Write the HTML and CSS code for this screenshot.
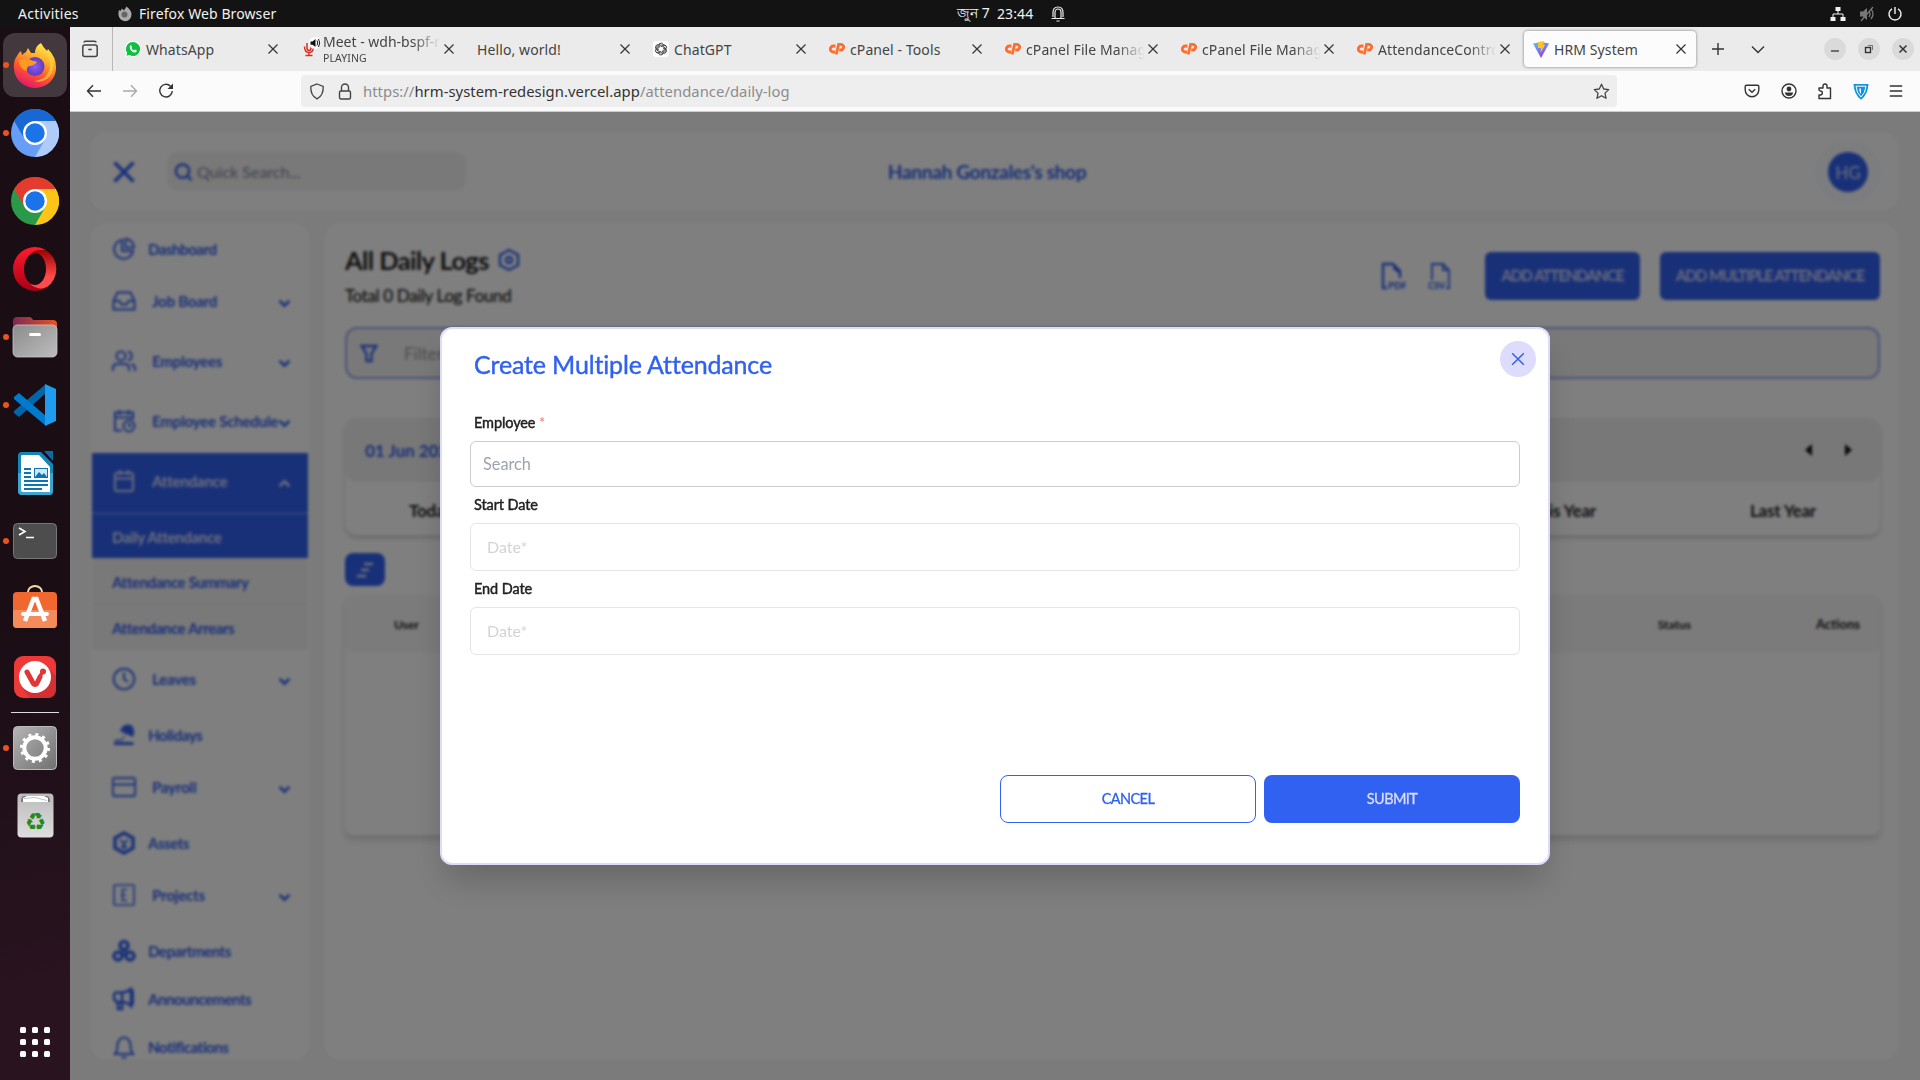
FILE: index.html
```html
<!DOCTYPE html>
<html lang="en">
<head>
<meta charset="utf-8">
<title>HRM System</title>
<link rel="stylesheet" href="styles.css">
</head>
<body>
<svg width="0" height="0" class="defs">
  <symbol id="x" viewBox="0 0 12 12"><path d="M1.5 1.5l9 9M10.500 1.500l-9 9" fill="none" stroke="currentColor" stroke-width="1.2"/></symbol>
  <symbol id="chev" viewBox="0 0 12 8"><path d="M1.500 1.500L6 6l4.500-4.500" fill="none" stroke="currentColor" stroke-width="2.400"/></symbol>
  <symbol id="cp" viewBox="0 0 16 14"><path d="M6.500 4H4.300a3 3 0 0 0 0 6H6M7.200 12.500L9.600 2.300h2.200a2.800 2.800 0 0 1 0 5.700h-1.600" fill="none" stroke="#ff6c2c" stroke-width="2.800"/></symbol>
</svg>

<header class="topbar">
  <span class="activities">Activities</span>
  <svg class="tb-fox" width="16" height="16" viewBox="0 0 16 16"><path d="M2 4l1.500 1L5 2.500 7 4.500 9.500.5c2 2 5 4 5 8a6.500 6.500 0 0 1-13 .3C1.500 7 1.500 5.500 2 4z" fill="#aaa"/><circle cx="7.500" cy="8.500" r="3" fill="#666"/></svg>
  <span class="app">Firefox Web Browser</span>
  <div class="clock"><span class="month">জুন 7</span><span class="time">23:44</span>
    <svg width="14" height="16" viewBox="0 0 14 16" fill="none" stroke="#eee" stroke-width="1.200"><path d="M.5 12.500h13M4 12V6.500a3 3.500 0 0 1 6 0V12M2 11V6.500Q2 1 7 1t5 5.500V11M5.500 15h3"/></svg></div>
  <div class="tray">
    <svg width="16" height="16" viewBox="0 0 16 16"><path d="M5.500 1h5v4h-5zM0.500 11h5v4h-5zM10.500 11h5v4h-5z" fill="#f2f2f2"/><path d="M8 5v3M3 11V8h10v3" fill="none" stroke="#f2f2f2"/></svg>
    <svg width="16" height="16" viewBox="0 0 16 16"><path d="M1 5.500h3L8 2v12l-4-3.500H1z" fill="#777"/><path d="M10 5q2 3 0 6M12 3q4 5 0 10M2 15L14 1" fill="none" stroke="#777" stroke-width="1.300"/></svg>
    <svg width="16" height="16" viewBox="0 0 16 16" fill="none" stroke="#f2f2f2" stroke-width="1.400"><path d="M5 2.800a6 6 0 1 0 6 0M8 1v7"/></svg>
  </div>
</header>

<div class="desktop">
<aside class="dock">
  <div class="app-slot running current">
    <svg width="44" height="46" viewBox="0 0 44 46"><defs><linearGradient id="ff" x1=".8" y1="0" x2=".35" y2="1"><stop offset="0" stop-color="#fff44f"/><stop offset=".35" stop-color="#ffb02e"/><stop offset=".65" stop-color="#ff5a2c"/><stop offset="1" stop-color="#e5156d"/></linearGradient><radialGradient id="fp"><stop offset="0" stop-color="#9059ff"/><stop offset="1" stop-color="#5b3fb5"/></radialGradient></defs>
    <path d="M4 14Q5 11 8 9l1 4q2-2 4-3l2-4 3 5h4Q22 4 28 1q2 4 6 8l1-2q8 8 8 18A21 20 0 0 1 1 27Q0 19 4 14z" fill="url(#ff)"/><circle cx="22" cy="24.500" r="9.500" fill="url(#fp)"/><path d="M6 18q8-3 14 1 3 0 4 1-3 4-8 4-3 2-2 5-8-2-8-11z" fill="#ff9a1f"/><path d="M28 6q11 9 9 20-3 12-16 13 12 3 18-8 4-12-3-21z" fill="#ffd53a" opacity=".65"/></svg></div>
  <div class="app-slot running">
    <svg width="48" height="48" viewBox="0 0 48 48"><circle cx="24" cy="24" r="24" fill="#669df6"/><path d="M3.200 12A24 24 0 0 1 44.800 12H24L13.600 30z" fill="#1967d2"/><path d="M44.800 12A24 24 0 0 1 24 48L34.400 30 24 12z" fill="#aecbfa"/><circle cx="24" cy="24" r="12" fill="#fff"/><circle cx="24" cy="24" r="9.700" fill="#1a73e8"/></svg></div>
  <div class="app-slot">
    <svg width="48" height="48" viewBox="0 0 48 48"><circle cx="24" cy="24" r="24" fill="#2a9a48"/><path d="M3.200 12A24 24 0 0 1 44.800 12H24L13.600 30z" fill="#e33b2e"/><path d="M44.800 12A24 24 0 0 1 24 48L34.400 30 24 12z" fill="#fcc417"/><circle cx="24" cy="24" r="12" fill="#fff"/><circle cx="24" cy="24" r="9.700" fill="#1a73e8"/></svg></div>
  <div class="app-slot">
    <svg width="44" height="44" viewBox="0 0 44 44"><defs><linearGradient id="op" x1="0" y1="0" x2="0" y2="1"><stop offset="0" stop-color="#ff1b2d"/><stop offset="1" stop-color="#a70014"/></linearGradient><linearGradient id="oq" x1="0" y1="0" x2="0" y2="1"><stop offset="0" stop-color="#9c0000"/><stop offset=".7" stop-color="#ff4b4b"/></linearGradient></defs><path d="M22 0a22 22 0 1 0 0 44 22 22 0 0 0 11-3L22 38c-6 0-11-7-11-16S16 6 22 6l11-3A22 22 0 0 0 22 0z" fill="url(#op)"/><path d="M17 7q4-4 10-4 4 0 7 1a22 22 0 0 1 0 36q-8 4-17-3 3 1 5 1c6 0 11-7 11-16S28 6 22 6q-3 0-5 1z" fill="url(#oq)"/></svg></div>
  <div class="app-slot running">
    <svg width="46" height="42" viewBox="0 0 46 42"><defs><linearGradient id="fo"><stop offset="0" stop-color="#7b2a56"/><stop offset="1" stop-color="#e95420"/></linearGradient><linearGradient id="gr" x1="0" y1="0" x2="1" y2="1"><stop offset="0" stop-color="#8c8c8c"/><stop offset="1" stop-color="#bdbdbd"/></linearGradient></defs><path d="M1 5q0-4 4-4h12q3 0 4 3h20q4 0 4 4v12H1z" fill="url(#fo)"/><rect x="1" y="9" width="44" height="32" rx="4.500" fill="url(#gr)" stroke="#c8c8c8" stroke-width=".8"/><rect x="17" y="17" width="12" height="3" rx="1.500" fill="#fff"/></svg></div>
  <div class="app-slot running">
    <svg width="42" height="42" viewBox="0 0 42 42"><path d="M0 29l5 4L32 9V0L0 27z" fill="#0065a9"/><path d="M0 13l5-4 27 23v10L0 15z" fill="#007acc"/><path d="M31 0l11 5v32l-11 5z" fill="#1f9cf0"/></svg></div>
  <div class="app-slot">
    <svg width="37" height="45" viewBox="0 0 37 45"><path d="M5 1h19l12 12v27q0 4-4 4H5q-4 0-4-4V5q0-4 4-4z" fill="#1584ba"/><path d="M1 22h35v18q0 4-4 4H5q-4 0-4-4z" fill="#3fa3d0"/><path d="M27 0h9v10z" fill="#0b6ba5"/><path d="M5 4h17l11 12v25H6q-2 0-2-2V6q0-2 1-2z" fill="#fff"/><path d="M7 18h7M7 22h7M7 26h7M7 30h24M7 34h24M7 38h18" stroke="#0c74b4" stroke-width="1.900"/><rect x="17.500" y="17.500" width="13" height="9" fill="#cfe9f7" stroke="#0c74b4"/><path d="M18 26l4-5 3 3 2-2 3 4z" fill="#0c74b4"/></svg></div>
  <div class="app-slot running">
    <svg width="44" height="36" viewBox="0 0 44 36"><rect x=".5" y=".5" width="43" height="35" rx="4" fill="#4d4d4d" stroke="#777"/><path d="M6 5l6 3.500L6 12M13 14.500h8" fill="none" stroke="#fff" stroke-width="1.600"/></svg></div>
  <div class="app-slot software">
    <svg width="44" height="43" viewBox="0 0 44 43"><path d="M15 9V7a7 6 0 0 1 14 0v2" fill="none" stroke="#f6d9a8" stroke-width="2"/><rect y="7" width="44" height="36" rx="4" fill="#f0672f"/><path d="M0 25h44v14q0 4-4 4H4q-4 0-4-4z" fill="#f58a5a"/><path d="M12 36l8.500-22h3L32 36" fill="none" stroke="#fff" stroke-width="4.500"/><rect x="8" y="27" width="28" height="4" rx="2" fill="#fff"/></svg></div>
  <div class="app-slot">
    <svg width="42" height="42" viewBox="0 0 42 42"><rect width="42" height="42" rx="9" fill="#ef3939"/><path d="M34 12l8 8v13q0 9-9 9H16L8 32z" fill="#d42f33"/><circle cx="21" cy="21" r="16" fill="#fff"/><path d="M13 16l6 11q2 3 4 0l3-6" fill="none" stroke="#e23636" stroke-width="5" stroke-linecap="round"/><path d="M25 22l4-7" stroke="#e23636" stroke-width="3.500"/><circle cx="29" cy="15.500" r="3" fill="#e23636"/></svg></div>
  <hr class="dock-sep">
  <div class="app-slot running">
    <svg width="44" height="44" viewBox="0 0 44 44"><defs><linearGradient id="sg" x1="0" y1="0" x2="1" y2="1"><stop offset="0" stop-color="#b5b5b5"/><stop offset="1" stop-color="#707070"/></linearGradient></defs><rect x=".5" y=".5" width="43" height="43" rx="4" fill="url(#sg)" stroke="#bbb"/><circle cx="22" cy="22" r="10.700" fill="none" stroke="#fff" stroke-width="4"/><circle cx="22" cy="22" r="13.500" fill="none" stroke="#fff" stroke-width="3" stroke-dasharray="3 4.070"/></svg></div>
  <div class="app-slot trash">
    <svg width="37" height="45" viewBox="0 0 37 45"><defs><linearGradient id="tr" x1="0" y1="0" x2="0" y2="1"><stop offset="0" stop-color="#bbb"/><stop offset="1" stop-color="#dedede"/></linearGradient></defs><rect x=".5" y=".5" width="36" height="44" rx="4" fill="url(#tr)"/><path d="M4 9q0-6 3-6h23q3 0 3 6z" fill="#777"/><path d="M6 9V5l4-2h17l4 2v4z" fill="#fff"/><path d="M7 5.500l11-1 12 3" fill="none" stroke="#999" stroke-width=".6"/><text x="18.500" y="37" text-anchor="middle" font-family="DejaVu Sans" font-size="24" fill="#258a1c">♻</text></svg></div>
  <div class="grid-btn"><i></i><i></i><i></i><i></i><i></i><i></i><i></i><i></i><i></i></div>
</aside>

<div class="window">
  <div class="tabs">
    <div class="fxview"><svg width="16" height="18" viewBox="0 0 16 18" fill="none" stroke="#444" stroke-width="1.500"><rect x=".8" y="5" width="14.400" height="11.500" rx="2"/><path d="M2 2.500Q2 1.200 3.500 1.200h9Q14 1.200 14 2.500M6.300 9.500h3.500"/></svg></div>
    <div class="tab"><svg width="16" height="16" viewBox="0 0 16 16"><path d="M8 0a8 8 0 1 1-3.800 15L0 16l1-4A8 8 0 0 1 8 0z" fill="#fff"/><path d="M8 1a7 7 0 1 1-3.500 13L1.500 14.800 2.200 12A7 7 0 0 1 8 1z" fill="#0fc13e"/><path d="M5.200 4.500q1-1 1.500.8l.3 1-.7.8q1 1.800 2.800 2.400l.9-1 1.700.8q.2 1.700-1.500 2.100-3 .2-5-3.200-1-2.200 0-3.700z" fill="#fff"/></svg><span class="t">WhatsApp</span><svg class="c"><use href="#x"/></svg></div>
    <div class="tab"><svg class="meet" width="18" height="20" viewBox="0 0 18 20"><path d="M4 6v5q0 2.500 2 2.500T8 11V6M1.500 9.500q0 6 4.500 6t4.500-6M6 15.500v3M2.500 18.500h7" fill="none" stroke="#d93025" stroke-width="1.500"/><circle cx="12" cy="6" r="6" fill="#fff"/><path d="M7.500 4.500h2L12.500 2v8L9.500 7.700h-2z" fill="#111"/><path d="M14 3.500q1.500 2.500 0 5M15.500 2q2.500 4 0 8" fill="none" stroke="#111"/></svg><span class="t two fade"><b>Meet - wdh-bspf-n</b><small>PLAYING</small></span><svg class="c"><use href="#x"/></svg></div>
    <div class="tab"><span class="t hello">Hello, world!</span><svg class="c"><use href="#x"/></svg></div>
    <div class="tab"><svg width="16" height="16" viewBox="0 0 16 16"><rect width="16" height="16" rx="3" fill="#fff"/><g fill="none" stroke="#222" stroke-width=".75"><path id="petal" d="M6 7V4.300a2.300 2.300 0 0 1 4.300-1.100M6 5.500l3-1.700q2.500-.8 3.500 1.500"/><use href="#petal" transform="rotate(60 8 8)"/><use href="#petal" transform="rotate(120 8 8)"/><use href="#petal" transform="rotate(180 8 8)"/><use href="#petal" transform="rotate(240 8 8)"/><use href="#petal" transform="rotate(300 8 8)"/></g></svg><span class="t">ChatGPT</span><svg class="c"><use href="#x"/></svg></div>
    <div class="tab"><svg width="16" height="14"><use href="#cp"/></svg><span class="t">cPanel - Tools</span><svg class="c"><use href="#x"/></svg></div>
    <div class="tab"><svg width="16" height="14"><use href="#cp"/></svg><span class="t fade">cPanel File Manag</span><svg class="c"><use href="#x"/></svg></div>
    <div class="tab"><svg width="16" height="14"><use href="#cp"/></svg><span class="t fade">cPanel File Manag</span><svg class="c"><use href="#x"/></svg></div>
    <div class="tab"><svg width="16" height="14"><use href="#cp"/></svg><span class="t fade">AttendanceContro</span><svg class="c"><use href="#x"/></svg></div>
    <div class="tab active"><svg width="16" height="17" viewBox="0 0 16 17"><defs><linearGradient id="vi" x1="0" y1="0" x2=".6" y2="1"><stop offset="0" stop-color="#41d1ff"/><stop offset="1" stop-color="#a031f5"/></linearGradient></defs><path d="M0 2.500L8 1l8 1.500L8 17z" fill="url(#vi)"/><path d="M5 1l6-1-.8 3.500 2 .2L7.500 12 8 7H5z" fill="#ffc51e"/></svg><span class="t">HRM System</span><svg class="c"><use href="#x"/></svg></div>
    <svg class="plus" width="14" height="14" viewBox="0 0 14 14"><path d="M7 1v12M1 7h12" stroke="#333" stroke-width="1.400"/></svg>
    <svg class="alltabs" width="14" height="9" viewBox="0 0 14 9"><path d="M1 1.500l6 6 6-6" fill="none" stroke="#333" stroke-width="1.400"/></svg>
    <div class="wc"><i><svg width="10" height="10" viewBox="0 0 10 10"><path d="M1 7h8" stroke="#333" stroke-width="1.300"/></svg></i><i><svg width="10" height="10" viewBox="0 0 10 10" fill="none" stroke="#333"><rect x="1.500" y="3.500" width="5" height="5" stroke-width="1.400"/><path d="M4 1.500h4.500V6" opacity=".6"/></svg></i><i><svg width="10" height="10" viewBox="0 0 10 10"><path d="M1.500 1.500l7 7M8.500 1.500l-7 7" stroke="#333" stroke-width="1.500"/></svg></i></div>
  </div>

  <div class="nav">
    <div class="nav-left">
      <svg width="16" height="14" viewBox="0 0 16 14" fill="none" stroke="#333" stroke-width="1.400"><path d="M15 7H1.500M7 1.200L1.500 7 7 12.800"/></svg>
      <svg width="16" height="14" viewBox="0 0 16 14" fill="none" stroke="#aaa" stroke-width="1.400"><path d="M1 7h13.500M9 1.200L14.500 7 9 12.800"/></svg>
      <svg width="16" height="16" viewBox="0 0 16 16"><path d="M12.500 3.200A6.300 6.300 0 1 0 14.300 8" fill="none" stroke="#333" stroke-width="1.400"/><path d="M15 .5V6H9.500z" fill="#333"/></svg>
    </div>
    <div class="urlbar">
      <svg width="16" height="17" viewBox="0 0 16 17" fill="none" stroke="#444" stroke-width="1.300"><path d="M8 1l6.200 2.500c.3 6-1.500 10-6.200 12.400C3.300 13.500 1.500 9.500 1.800 3.500z"/></svg>
      <svg width="14" height="17" viewBox="0 0 14 17" fill="none" stroke="#444" stroke-width="1.400"><rect x="1.500" y="8" width="11" height="8" rx="1.500"/><path d="M3.500 8V4.500a3.500 3.500 0 0 1 7 0V8"/></svg>
      <span class="url">https://<b>hrm-system-redesign.vercel.app</b>/attendance/daily-log</span>
      <svg width="17" height="17" viewBox="0 0 17 17" fill="none" stroke="#444" stroke-width="1.300" stroke-linejoin="round"><path d="M8.500 1.300l2.200 4.700 5 .6-3.700 3.500 1 5.200-4.500-2.600L4 15.300l1-5.200L1.300 6.600l5-.6z"/></svg>
    </div>
    <div class="nav-right">
      <svg width="16" height="16" viewBox="0 0 16 16" fill="none" stroke="#333" stroke-width="1.400"><path d="M2.500 2.200h11q1.300 0 1.300 1.300V7a6.800 6.800 0 0 1-13.600 0V3.500q0-1.300 1.300-1.300z"/><path d="M4.800 6.300L8 9.300l3.200-3"/></svg>
      <svg width="16" height="16" viewBox="0 0 16 16"><circle cx="8" cy="8" r="7" fill="none" stroke="#333" stroke-width="1.400"/><circle cx="8" cy="6" r="2.400" fill="#333"/><path d="M3.800 9.500h8.400Q11.500 13 8 13T3.800 9.500z" fill="#333"/></svg>
      <svg width="16" height="17" viewBox="0 0 16 17" fill="none" stroke="#333" stroke-width="1.400"><path d="M2 7V5h4V3a2 2 0 0 1 4 0v2h3.500v10.500H2V12h1.300a2 2 0 0 0 0-4z" stroke-linejoin="round"/></svg>
      <svg width="16" height="17" viewBox="0 0 16 17"><path d="M.5 1h15Q15 11.500 8 16.800 1 11.500.5 1z" fill="#1593dd"/><path d="M3 3.200h10Q12.500 10 8 14 3.500 10 3 3.200z" fill="none" stroke="#fff" stroke-width="1"/><path d="M8 5.500H6.200Q6.200 9 8 11z" fill="#fff"/></svg>
      <svg width="14" height="14" viewBox="0 0 14 14" stroke="#333" stroke-width="1.500"><path d="M.8 2h12.400M.8 7h12.400M.8 12h12.400"/></svg>
    </div>
  </div>

  <div class="page">
    <header class="shop">
      <svg class="burger" width="24" height="24" viewBox="0 0 24 24"><path d="M2.500 2.500l19 19M21.500 2.500l-19 19" stroke="#3161f1" stroke-width="3.500"/></svg>
      <div class="search"><svg width="19" height="20" viewBox="0 0 20 20" fill="none" stroke="#3161f1" stroke-width="2.600"><circle cx="9" cy="9" r="7"/><path d="M14 14l4.500 4.500"/></svg><span>Quick Search...</span></div>
      <h1>Hannah Gonzales's shop</h1>
      <div class="halo"><div class="avatar">HG</div></div>
    </header>
    <div class="cols">
      <nav class="side">
        <a class="leaf"><svg viewBox="0 0 24 24"><path d="M10 3a9.500 9.500 0 1 0 11 11H10z"/><path d="M13.500 1.800A9 9 0 0 1 22 10.500h-8.500z"/></svg><span>Dashboard</span></a>
        <a class="grp"><svg viewBox="0 0 24 24"><path d="M1.500 12h6l2 3.500h5l2-3.500h6M5.500 3.500h13l4 8.500v8.500h-21V12z"/></svg><span>Job Board</span><svg class="v"><use href="#chev"/></svg></a>
        <a class="grp"><svg viewBox="0 0 24 24"><circle cx="9" cy="7" r="4.500"/><path d="M1 22v-3q0-4 4-4h8q4 0 4 4v3M16 2.500a4.600 4.600 0 0 1 0 9M19.500 15.200q3.500 1 3.500 4V22"/></svg><span>Employees</span><svg class="v"><use href="#chev"/></svg></a>
        <a class="grp"><svg viewBox="0 0 24 24"><path d="M10 21.500H3v-18h18v7M3 8.500h18M7.500 1v5M16.500 1v5"/><circle cx="17" cy="17" r="5.500"/><path d="M17 14v3h2.500"/></svg><span>Employee Schedule</span><svg class="v"><use href="#chev"/></svg></a>
        <a class="grp on"><svg viewBox="0 0 24 24"><rect x="3" y="4" width="18" height="18" rx="2"/><path d="M3 9.500h18M8 1v5M16 1v5"/></svg><span>Attendance</span><svg class="v up"><use href="#chev"/></svg></a>
        <a class="sub on">Daily Attendance</a>
        <a class="sub">Attendance Summary</a>
        <a class="sub">Attendance Arrears</a>
        <a class="grp leaves"><svg viewBox="0 0 24 24"><circle cx="12" cy="12" r="10.300"/><path d="M12 5.500V12l4 3"/></svg><span>Leaves</span><svg class="v"><use href="#chev"/></svg></a>
        <a class="leaf"><svg class="f" viewBox="0 0 24 24"><path d="M8 8Q11 0 19 2q5 5 2 12zM15 9l-5 9H1q5-3 8-1M2 19h19l1 3H2z"/></svg><span>Holidays</span></a>
        <a class="grp"><svg viewBox="0 0 24 24"><rect x="0.800" y="3" width="22.400" height="18" rx="2"/><path d="M1 9.500h22"/></svg><span>Payroll</span><svg class="v"><use href="#chev"/></svg></a>
        <a class="leaf"><svg viewBox="0 0 24 24"><path d="M12 2l9 5v10l-9 5-9-5V7z" stroke-width="3.500"/><path d="M8 9l4 3 4-3M12 12v4M9 15l3 2 3-2"/></svg><span>Assets</span></a>
        <a class="grp"><svg viewBox="0 0 24 24" class="thin"><rect x="2" y="2" width="20" height="20" rx="1"/><path d="M15 6.500h-4.500v11H15M9 12h5"/></svg><span>Projects</span><svg class="v"><use href="#chev"/></svg></a>
        <a class="leaf"><svg viewBox="0 0 24 24"><circle cx="12" cy="6.500" r="4" stroke-width="3.500"/><circle cx="6" cy="17" r="4" stroke-width="3.500"/><circle cx="18" cy="17" r="4" stroke-width="3.500"/><circle cx="12" cy="13.500" r="2"/></svg><span>Departments</span></a>
        <a class="leaf"><svg viewBox="0 0 24 24"><path d="M3 5.500h7q5 0 9-3.500v17q-4-4-9-4H5q-3-1-3-5t2-4.500M6 15v7h4v-7M10 5.500V15" stroke-width="2.600"/><path d="M20 3v15" stroke-width="4"/></svg><span>Announcements</span></a>
        <a class="leaf"><svg viewBox="0 0 24 24"><path d="M3 19q2.500-3 2.500-9a6.500 7.500 0 0 1 13 0q0 6 2.500 9zM9.500 22.500h5"/></svg><span>Notifications</span></a>
      </nav>
      <main class="main">
        <div class="head">
          <div><div class="h"><h2>All Daily Logs</h2><svg width="22" height="24" viewBox="0 0 22 24" fill="none" stroke="#3161f1" stroke-width="2.400"><path d="M11 2l9 5v10l-9 5-9-5V7z"/><circle cx="11" cy="12" r="3"/></svg></div><p>Total 0 Daily Log Found</p></div>
          <div class="acts">
            <svg width="25" height="28" viewBox="0 0 25 28"><path d="M6 26H2V2h10l7 7v7" fill="none" stroke="#3161f1" stroke-width="2.400"/><path d="M12 1l8 8v4l-8-6z" fill="#3161f1"/><text x="7" y="27" font-size="9.500">PDF</text></svg>
            <svg width="23" height="28" viewBox="0 0 23 28"><path d="M4 18V2h11l6 6v18h-3M15 2v6h6" fill="none" stroke="#3161f1" stroke-width="1.800"/><text x="0" y="27" font-size="9">CSV</text></svg>
            <button class="b1">ADD ATTENDANCE</button><button class="b2">ADD MULTIPLE ATTENDANCE</button>
          </div>
        </div>
        <div class="filter"><svg width="18" height="19" viewBox="0 0 18 19" fill="none" stroke="#3161f1" stroke-width="2.300"><path d="M1.500 2h15l-5 7.500V17h-5V9.500z"/></svg><span>Filter</span></div>
        <section class="range">
          <div class="dates"><span>01 Jun 2024</span><i class="l"></i><i class="r"></i></div>
          <div class="presets"><span>Today</span><span class="ty">This Year</span><span class="ly">Last Year</span></div>
        </section>
        <button class="toggle"><svg width="18" height="18" viewBox="0 0 18 18"><path d="M8 3h9M5 9h8M1 15h9" stroke="#dddcfd" stroke-width="2.600"/></svg></button>
        <section class="table"><div class="th"><span class="u">User</span><span class="st">Status</span><span class="ac">Actions</span></div></section>
      </main>
    </div>

    <div class="overlay">
      <form class="modal">
        <h3>Create Multiple Attendance</h3>
        <button type="button" class="close"><svg width="14" height="14" viewBox="0 0 14 14"><path d="M1.200 1.200l11.600 11.600M12.800 1.200L1.200 12.800" stroke="#3161f1" stroke-width="1.500"/></svg></button>
        <label>Employee <em>*</em></label>
        <div class="inp emp">Search</div>
        <label class="l2">Start Date</label>
        <div class="inp date">Date*</div>
        <label class="l3">End Date</label>
        <div class="inp date">Date*</div>
        <div class="btns"><button type="button" class="cancel">CANCEL</button><button type="button" class="submit">SUBMIT</button></div>
      </form>
    </div>
  </div>
</div>
</div>
</body>
</html>
```
FILE: styles.css
```css
*{box-sizing:border-box}
body{margin:0;width:1920px;height:1080px;overflow:hidden;font-family:"Noto Sans",sans-serif;display:flex;flex-direction:column}
svg{display:block;flex:none}
.defs{position:absolute}
button{font:inherit;border:0;padding:0;display:flex;align-items:center;justify-content:center}
h1,h2,h3,p{margin:0}

.topbar{height:27px;flex:none;background:#131313;color:#f2f2f2;font-size:14px;display:flex;align-items:center;position:relative;padding-left:18px;white-space:nowrap}
.activities{width:99px;letter-spacing:.25px}
.tb-fox{margin-right:6px}
.app{letter-spacing:.1px}
.clock{display:flex;align-items:center;position:absolute;left:957px;top:0;height:27px}
.month{width:40px;font-size:14px}
.time{width:54px;letter-spacing:.1px}
.tray{margin-left:auto;display:flex;gap:12.500px;padding-right:17px}

.desktop{flex:1;display:flex;min-height:0}
.dock{width:70px;flex:none;background:linear-gradient(165deg,#1a0d14 55%,#28131f 90%);display:flex;flex-direction:column;align-items:center;padding-top:4px}
.app-slot{width:70px;height:68px;display:flex;align-items:center;justify-content:center;position:relative}
.running::before{content:"";position:absolute;left:3px;top:31px;width:6px;height:6px;border-radius:50%;background:#e95420}
.current::after{content:"";position:absolute;left:3px;top:2px;width:64px;height:64px;border-radius:12px;background:rgba(255,255,255,.18)}
.current svg{position:relative;z-index:1}
.current::before{z-index:2}
.software{padding-bottom:5px}
.trash{padding-bottom:2px}
.dock-sep{width:48px;height:1px;border:0;background:#ddd;margin:1px 0 1px}
.grid-btn{margin:auto 0 23px;display:grid;grid-template-columns:repeat(3,6px);gap:6px}
.grid-btn i{width:6px;height:6px;border-radius:1.500px;background:#fff}

.window{flex:1;display:flex;flex-direction:column;min-width:0}
.tabs{height:44px;flex:none;background:#ebebeb;display:flex;align-items:center;color:#444}
.fxview{width:43px;height:44px;border-right:1px solid #b8b8b8;padding:0 6px 0 4px;margin-right:2px;display:flex;align-items:center;justify-content:center}
.tab{width:176px;height:36px;display:flex;align-items:center;padding-left:10px;position:relative;font-size:14px}
.tab .t{margin-left:5px;white-space:nowrap;width:120.500px;letter-spacing:.1px;line-height:20px;padding-top:1px}
.tab .t.hello{margin-left:0;width:141.500px}
.tab .c{width:12px;height:12px;color:#333}
.tab .fade{-webkit-mask-image:linear-gradient(90deg,#000 75%,transparent 98%);mask-image:linear-gradient(90deg,#000 75%,transparent 98%)}
.tab .two{display:flex;flex-direction:column;margin-left:4px;width:119.500px;padding-top:0}
.two b{font-weight:400;line-height:16px;letter-spacing:0}
.two small{font-size:10.500px;line-height:14px;letter-spacing:.1px;padding-top:1px}
.meet{margin-left:2px;margin-right:-2px;margin-bottom:4px}
.active::before{content:"";position:absolute;left:1px;right:3px;top:0;bottom:0;background:#fcfcfc;border-radius:4px;box-shadow:0 0 3px rgba(0,0,0,.5)}
.active>*{position:relative}
.plus{margin-left:12px}
.alltabs{margin-left:26px}
.wc{margin-left:auto;display:flex;gap:12px;padding-right:6px}
.wc i{width:22px;height:22px;border-radius:50%;background:#dadada;display:flex;align-items:center;justify-content:center}

.nav{height:41px;flex:none;background:#fbfbfb;border-bottom:1px solid #ccc;display:flex;align-items:center}
.nav-left{width:231px;display:flex;align-items:center;gap:20px;padding-left:16px}
.urlbar{width:1316px;height:32px;background:#eee;border-radius:4px;display:flex;align-items:center;padding:0 7px 0 8px}
.urlbar svg:nth-child(2){margin-left:13px}
.url{margin-left:11px;flex:1;font-size:14.800px;color:#8c8c8c;white-space:nowrap;letter-spacing:.05px}
.url b{font-weight:400;color:#333}
.nav-right{margin-left:auto;display:flex;align-items:center;gap:20px;padding-right:17px}
.nav-right svg:first-child{margin-right:1px}

.page{flex:1;min-height:0;background:#f6f6f6;position:relative;padding:20px 21px 20px 20px;display:flex;flex-direction:column;gap:12px;font-family:Lato,sans-serif;color:#222;font-weight:700}
.shop{height:79px;flex:none;background:#fff;border-radius:16px;display:flex;align-items:center;position:relative;box-shadow:0 0 3px rgba(0,0,0,.04)}
.burger{margin-left:22px}
.search{margin-left:31px;width:299px;height:39px;border-radius:10px;background:#f2f2f2;display:flex;align-items:center;padding-left:7px;gap:4px;font-size:16px;font-weight:400;color:#8088a0}
h1{flex:1;text-align:center;color:#3161f1;font-size:19px;letter-spacing:-.3px;margin-right:341px;margin-left:-50px}
.halo{position:absolute;right:18px;top:7px;width:66px;height:66px;border-radius:50%;background:#f8fafd;display:flex;align-items:center;justify-content:center}
.avatar{width:40px;height:40px;border-radius:50%;background:#3161f1;color:#d4dbfa;font-size:17px;font-weight:400;display:flex;align-items:center;justify-content:center}
.cols{flex:1;display:flex;gap:14px;min-height:0}
.side,.main{background:#fff;border-radius:16px;box-shadow:0 0 3px rgba(0,0,0,.04)}
.side{width:220px;overflow:hidden;flex:none;padding:0 2px;color:#3161f1;font-size:15px;letter-spacing:-.2px}
.side a{display:flex;align-items:center;white-space:nowrap;padding-left:20px}
.side a>svg:first-child{width:24px;height:24px;fill:none;stroke:currentColor;stroke-width:2}
.side a>svg.f{fill:currentColor;stroke:none}
.side a>svg.thin{stroke-width:1.600}
.side .leaf{height:48px;padding-top:3px;letter-spacing:-.45px}
.leaf span{margin-left:12px}
.grp{height:60px}
.grp span{margin-left:16px;width:126px}
.side .v{width:13px;height:9px;margin-top:4px}
.side .up{transform:rotate(180deg)}
.side .on{background:#3161f1;color:#d6dbfb}
.grp.on{height:60px;padding-bottom:4px;margin-top:2px}
.leaves{margin-top:-1px}
.side .sub{height:46px;background:#f3f3f3;border-top:1px solid #e4e4f6;letter-spacing:-.4px}
.side .sub.on{background:#3161f1;height:46px;margin-bottom:-1px;border-color:#8fa6f3;letter-spacing:-.3px}
.side .sub.on+.sub{margin-top:0}
.main{flex:1;padding:28px 19px 0 21px}
.head{display:flex;justify-content:space-between;height:76px}
.h{display:flex;align-items:center;gap:9px;height:20px}
h2{font-size:25.500px;line-height:20px;letter-spacing:-.6px;margin-top:-2px}
.h svg{margin-top:-2px}
.head p{font-size:17px;font-weight:400;margin-top:14px;line-height:22px;letter-spacing:-.35px;-webkit-text-stroke:.2px}
.acts{display:flex;align-items:center;height:49px}
.acts text{fill:#3161f1;font-weight:900}
.acts>svg{margin-top:0}
.acts>svg:nth-child(2){margin-left:22px}
.acts button{height:48px;border-radius:6px;background:#3161f1;color:#dddcfd;font-size:15px;font-weight:400;letter-spacing:-.9px;-webkit-text-stroke:.3px;padding-bottom:2px}
.acts .b2{letter-spacing:-.88px}
.b1{width:155px;margin-left:34px}.b2{width:220px;margin-left:20px}
.filter{height:52px;border:2px solid #94a8f0;border-radius:12px;background:#f3f3f3;display:flex;align-items:center;padding-left:13px;gap:26px;font-size:17px;font-weight:400;color:#9a9a9a}
.range{margin-top:39px;height:117px;border-radius:12px;background:#fff;box-shadow:0 3px 5px rgba(0,0,0,.18)}
.dates{height:64px;background:#f1f1f1;border-radius:12px;display:flex;align-items:center;padding:0 28px 0 20px;color:#3161f1;font-size:17px}
.dates i{border:6px solid transparent}
.dates .l{margin-left:auto;border-right-color:#111;border-left:0;margin-right:33px;border-right-width:7px}
.dates .r{border-left-color:#111;border-right:0;border-left-width:7px}
.presets{height:53px;display:flex;align-items:center;padding:3px 64px 0;font-size:17px;letter-spacing:-.2px}
.ty{margin-left:auto;margin-right:154px}
.toggle{margin-top:18px;width:40px;height:33px;border-radius:8px;background:#3161f1}
.table{margin-top:9px;height:240px;border-radius:8px;background:#fff;box-shadow:0 5px 7px rgba(0,0,0,.14)}
.th{height:58px;background:#f7f7f7;border-radius:8px;display:flex;align-items:center;padding:0 20px 0 49px;font-size:12px}
.st{margin-left:auto;margin-right:125px}
.ac{font-size:13px}

.overlay{position:absolute;inset:0;background:rgba(0,0,0,.5);backdrop-filter:blur(1.500px);display:flex;align-items:center;justify-content:center}
.modal{position:relative;width:1110px;height:538px;background:#fff;border:2px solid #dddcfd;border-radius:12px;box-shadow:0 20px 35px -5px rgba(0,0,0,.2);padding:22px 28px 0;font-weight:400}
h3{font-weight:400;font-size:25px;line-height:26px;color:#3161f1;padding-left:4px;height:60px;letter-spacing:-.16px;-webkit-text-stroke:.4px}
.close{position:absolute;right:12px;top:12px;width:36px;height:36px;border-radius:50%;background:#dddcfd}
label{display:block;height:30px;line-height:20px;padding-left:4px;padding-top:2px;font-size:14.500px;color:#222;letter-spacing:-.1px;-webkit-text-stroke:.45px}
label em{color:#f87171;font-style:normal;-webkit-text-stroke:0}
.inp{border:1px solid #e5e5e5;border-radius:6px;display:flex;align-items:center;font-size:16px;padding-bottom:2px}
.emp{height:46px;border-color:#ccc;padding-left:12px;color:#9ca3af;font-size:16.300px}
.date{height:48px;padding-left:16px;color:#d3d3d3}
.l2,.l3{height:36px;padding-top:8px}
.btns{display:flex;gap:8px;justify-content:flex-end;margin-top:120px}
.btns button{width:256px;height:48px;border-radius:8px;font-size:14.500px;letter-spacing:-.6px;-webkit-text-stroke:.3px;padding-bottom:2px}
.cancel{border:1px solid #3161f1;background:#fff;color:#3161f1}
.submit{background:#3161f1;color:#dddcfd}
```
